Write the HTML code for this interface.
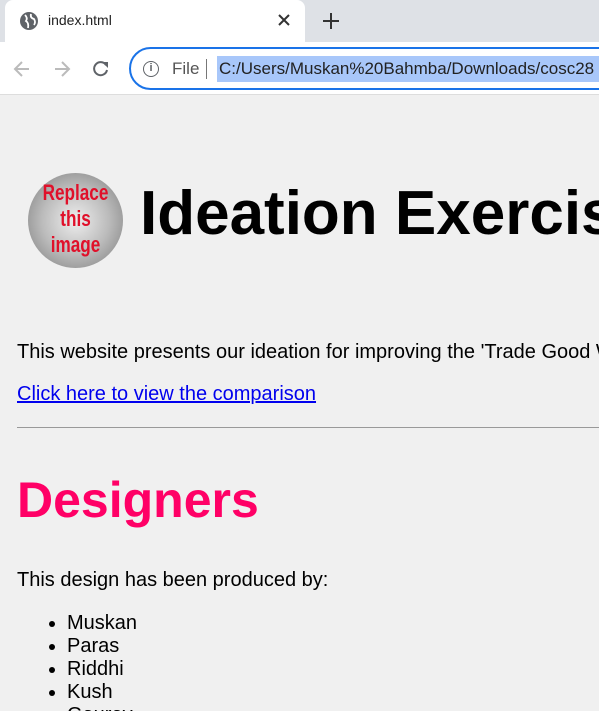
<!DOCTYPE html>
<html><head><style>
*{margin:0;padding:0;box-sizing:border-box}
html,body{width:599px;height:711px;overflow:hidden}
body{background:#f0f0f0;font-family:"Liberation Sans",Arial,sans-serif;position:relative}
.top{position:absolute;left:0;top:0;width:599px;height:42px;background:#dee1e6}
.tab{position:absolute;left:5px;top:0;width:300px;height:42px;background:#fff;border-radius:8px 8px 0 0}
.bar{position:absolute;left:0;top:42px;width:599px;height:53px;background:#fff;border-bottom:1px solid #ddd}
.omni{position:absolute;left:129px;top:47px;width:500px;height:43px;border:2px solid #1a73e8;border-radius:22px;background:#fff}
.ab{position:absolute;white-space:nowrap}
</style></head><body>
<div class="top"></div>
<div class="tab"></div>
<svg class="ab" style="left:19px;top:11px" width="20" height="20" viewBox="0 0 20 20"><circle cx="10" cy="10" r="9" fill="#5f6368"/><path d="M6 4 Q9 7 7 10 Q10 12 9 17 M12 3 Q11 7 15 8 Q17 11 15 14" stroke="#fff" stroke-width="1.8" fill="none"/></svg>
<div class="ab" style="left:48px;top:12px;font-size:14px;color:#222">index.html</div>
<svg class="ab" style="left:278px;top:14px" width="12" height="12" viewBox="0 0 12 12"><path d="M1 1L11 11M11 1L1 11" stroke="#333" stroke-width="2"/></svg>
<svg class="ab" style="left:322px;top:12px" width="18" height="18" viewBox="0 0 18 18"><path d="M9 1V17M1 9H17" stroke="#333" stroke-width="2"/></svg>
<div class="bar"></div>
<svg class="ab" style="left:12px;top:59px" width="20" height="20" viewBox="0 0 20 20"><path d="M17 10H3M10 3L3 10L10 17" stroke="#bbb" stroke-width="2" fill="none"/></svg>
<svg class="ab" style="left:52px;top:59px" width="20" height="20" viewBox="0 0 20 20"><path d="M3 10H17M10 3L17 10L10 17" stroke="#bbb" stroke-width="2" fill="none"/></svg>
<svg class="ab" style="left:91px;top:59px" width="20" height="20" viewBox="0 0 20 20"><path d="M15 6 A6.5 6.5 0 1 0 16 11" stroke="#5f6368" stroke-width="2" fill="none"/><path d="M11 3 L17 3 L17 9 Z" fill="#5f6368"/></svg>
<div class="omni"></div>
<div class="ab" style="left:143px;top:61px;width:16px;height:16px;border:1.5px solid #5f6368;border-radius:50%;font-size:11px;text-align:center;line-height:13px;color:#5f6368;font-weight:bold">i</div>
<div class="ab" style="left:172px;top:59px;font-size:17px;color:#555">File</div>
<div class="ab" style="left:206px;top:59px;width:1px;height:20px;background:#777"></div>
<div class="ab" style="left:217px;top:56px;height:26px;width:390px;background:#a8c7fa"></div>
<div class="ab" style="left:219px;top:59px;font-size:17px;color:#222">C:/Users/Muskan%20Bahmba/Downloads/cosc28</div>
<div class="ab" style="left:28px;top:173px;width:95px;height:95px;border-radius:50%;background:radial-gradient(circle at 50% 50%,#eee,#bbb 50%,#999 75%,#ccc);"></div>
<div class="ab" style="left:28px;top:180px;width:95px;text-align:center;font-size:22px;line-height:26px;font-weight:bold;color:#e0102a;transform:scaleX(0.78)">Replace<br>this<br>image</div>
<div class="ab" style="left:140px;top:178px;font-size:62px;font-weight:bold;color:#000">Ideation Exercise</div>
<div class="ab" style="left:17px;top:341px;font-size:20px;color:#000">This website presents our ideation for improving the 'Trade Good Website'</div>
<div class="ab" style="left:17px;top:383px;font-size:20px;color:#00e;text-decoration:underline">Click here to view the comparison</div>
<div class="ab" style="left:17px;top:427px;width:590px;height:1px;background:#999"></div>
<div class="ab" style="left:17px;top:471px;font-size:50px;font-weight:bold;color:#ff0066">Designers</div>
<div class="ab" style="left:17px;top:569px;font-size:20px;color:#000">This design has been produced by:</div>
<ul class="ab" style="left:67px;top:612px;font-size:20px;line-height:23px;color:#000"><li>Muskan</li><li>Paras</li><li>Riddhi</li><li>Kush</li><li>Gaurav</li></ul>
</body></html>
